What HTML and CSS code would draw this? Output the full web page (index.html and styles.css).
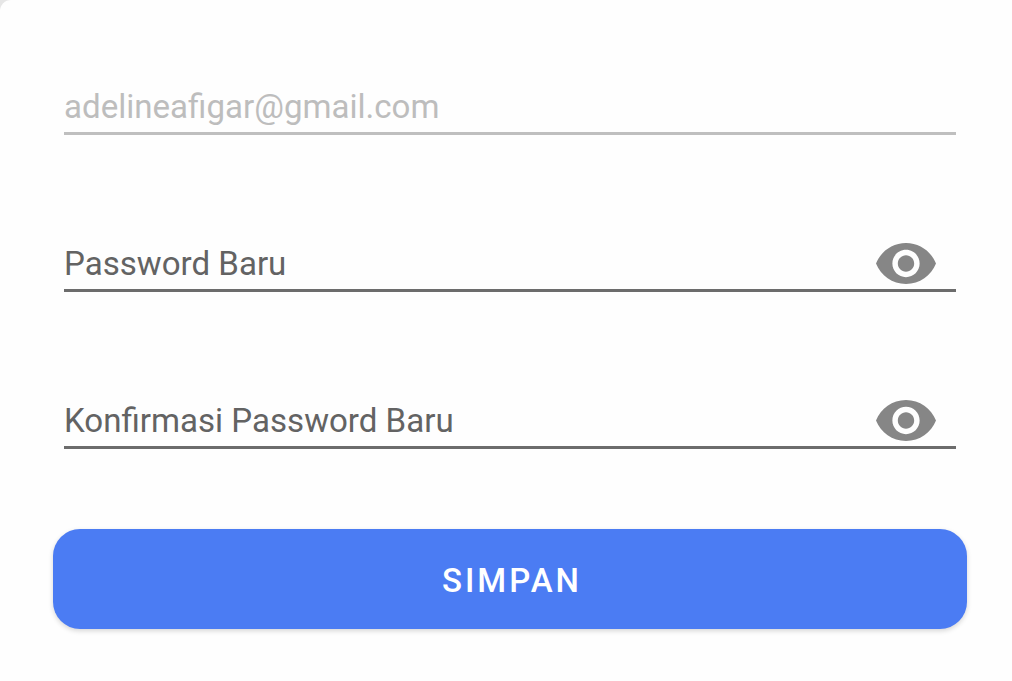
FILE: index.html
```html
<!DOCTYPE html>
<html lang="id">
<head>
<meta charset="utf-8">
<title>Password Baru</title>
<link rel="stylesheet" href="styles.css">
</head>
<body>
<form class="card">
  <div class="field field-disabled"><span class="label">adelineafigar@gmail.com</span></div>
  <div class="field"><span class="label">Password Baru</span>
    <svg class="eye" viewBox="1 4.5 22 15"><path d="M12 4.5C7 4.5 2.73 7.61 1 12c1.73 4.39 6 7.5 11 7.5s9.27-3.11 11-7.5c-1.73-4.39-6-7.5-11-7.5zM12 17c-2.76 0-5-2.24-5-5s2.24-5 5-5 5 2.24 5 5-2.24 5-5 5zm0-8c-1.66 0-3 1.34-3 3s1.34 3 3 3 3-1.34 3-3-1.34-3-3-3z"/></svg></div>
  <div class="field"><span class="label">Konfirmasi Password Baru</span>
    <svg class="eye" viewBox="1 4.5 22 15"><path d="M12 4.5C7 4.5 2.73 7.61 1 12c1.73 4.39 6 7.5 11 7.5s9.27-3.11 11-7.5c-1.73-4.39-6-7.5-11-7.5zM12 17c-2.76 0-5-2.24-5-5s2.24-5 5-5 5 2.24 5 5-2.24 5-5 5zm0-8c-1.66 0-3 1.34-3 3s1.34 3 3 3 3-1.34 3-3-1.34-3-3-3z"/></svg></div>
  <button class="save" type="button">SIMPAN</button>
</form>
</body>
</html>
```
FILE: styles.css
```css
* { box-sizing: border-box; }
body { margin: 0; background: #e6e6e6; font-family: Roboto, sans-serif; overflow: hidden; }
.card { height: 681px; padding: 77px 45px 0 53px; background: #fefefe; border-top-left-radius: 11px; display: flex; flex-direction: column; }
.field { height: 58px; margin: 0 11px 99px; padding-top: 5px; color: #636363; display: flex; justify-content: space-between; align-items: center; border-bottom: 3px solid #6c6c6c; }
.field-disabled { color: #bdbdbd; border-color: #bfbfbf; }
.label { font-size: 33.1px; line-height: 40px; white-space: nowrap; }
.eye { width: 60px; height: 41px; margin: 0 20px 2px 0; fill: #868686; }
.save { height: 100px; margin-top: -19px; padding: 2px 0 0 4px; border: 0; border-radius: 27px; background: #4b7cf3; color: #fff; font: 500 33px Roboto, sans-serif; letter-spacing: 3px; box-shadow: 0 2px 5px rgba(0,0,0,.16); }
```
